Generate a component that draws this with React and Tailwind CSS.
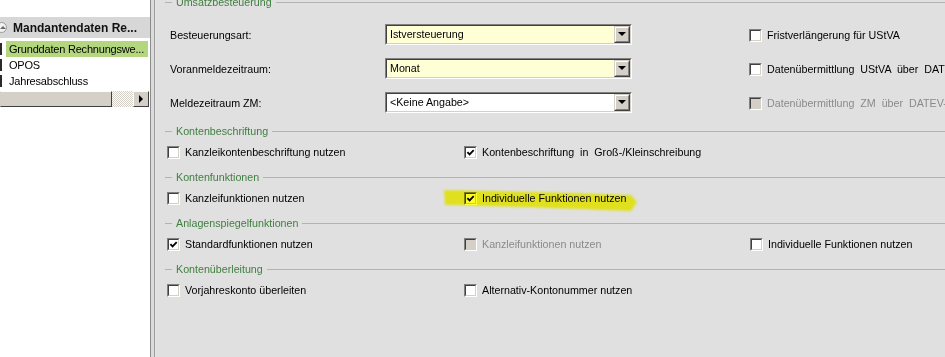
const TOP_ROWS = [
  { label: "Besteuerungsart:", value: "Istversteuerung", yellow: true, check: "Fristverlängerung für UStVA" },
  { label: "Voranmeldezeitraum:", value: "Monat", yellow: true, check: "Datenübermittlung  UStVA  über  DATEV" },
  { label: "Meldezeitraum ZM:", value: "<Keine Angabe>", yellow: false, check: "Datenübermittlung  ZM  über  DATEV-Rechenzentrum", disabled: true },
];

const SECTIONS = [
  {
    title: "Kontenbeschriftung",
    items: [
      { label: "Kanzleikontenbeschriftung nutzen" },
      { label: "Kontenbeschriftung  in  Groß-/Kleinschreibung", checked: true },
    ],
  },
  {
    title: "Kontenfunktionen",
    items: [{ label: "Kanzleifunktionen nutzen" }, { label: "Individuelle Funktionen nutzen", checked: true }],
  },
  {
    title: "Anlagenspiegelfunktionen",
    items: [
      { label: "Standardfunktionen nutzen", checked: true },
      { label: "Kanzleifunktionen nutzen", disabled: true },
      { label: "Individuelle Funktionen nutzen" },
    ],
  },
  {
    title: "Kontenüberleitung",
    items: [{ label: "Vorjahreskonto überleiten" }, { label: "Alternativ-Kontonummer nutzen" }],
  },
];

function Check({ checked, disabled }) {
  return (
    <span className="inline-block h-[13px] w-[13px] shrink-0 border border-t-[#808080] border-l-[#808080] border-r-white border-b-white">
      <span
        className={`flex h-full w-full items-center justify-center border border-t-[#404040] border-l-[#404040] border-r-[#d4d0c8] border-b-[#d4d0c8] ${
          disabled ? "bg-[#d4d0c8]" : "bg-white"
        }`}
      >
        {checked ? (
          <svg viewBox="0 0 9 9" className="h-[9px] w-[9px]">
            <path d="M1.4 4.1 3.6 6.4 7.7 2.1" fill="none" stroke="#000" strokeWidth="1.8" />
          </svg>
        ) : null}
      </span>
    </span>
  );
}

function CheckLabel({ label, checked, disabled }) {
  return (
    <div className="flex items-center gap-[5px] whitespace-pre">
      <Check checked={checked} disabled={disabled} />
      <span className={disabled ? "text-[#8a8a8a]" : "text-black"}>{label}</span>
    </div>
  );
}

function Combo({ value, yellow }) {
  return (
    <div className="flex h-[21px] w-[247px] border border-t-[#808080] border-l-[#808080] border-r-white border-b-white">
      <div
        className={`flex flex-1 items-center border border-t-[#404040] border-l-[#404040] border-r-[#d4d0c8] border-b-[#d4d0c8] ${
          yellow ? "bg-[#ffffd6]" : "bg-white"
        }`}
      >
        <span className="flex-1 pl-[3px] text-black">{value}</span>
        <span className="flex h-full w-[16px] border border-t-[#d4d0c8] border-l-[#d4d0c8] border-r-[#404040] border-b-[#404040]">
          <span className="flex flex-1 items-center justify-center border border-t-white border-l-white border-r-[#808080] border-b-[#808080] bg-[#d4d0c8]">
            <span className="h-0 w-0 border-x-[4px] border-t-[4px] border-x-transparent border-t-black" />
          </span>
        </span>
      </div>
    </div>
  );
}

function Section({ title, className = "" }) {
  return (
    <div className={`flex h-[14px] items-center pl-[9px] ${className}`}>
      <span className="h-px w-[7px] bg-[#b3b3b3]" />
      <span className="px-[4px] text-[#3f7f3f]">{title}</span>
      <span className="h-px flex-1 bg-[#b3b3b3]" />
    </div>
  );
}

function Sidebar() {
  return (
    <div className="flex w-[150px] shrink-0 flex-col bg-white pt-[17px]">
      <div className="flex h-[21px] items-center bg-[#d7d7d7]">
        <span className="-ml-[4px] flex h-[11px] w-[11px] items-center justify-center rounded-full border border-[#9a9a9a] bg-[#f2f2f2]">
          <span className="ml-[3px] h-0 w-0 border-x-[3px] border-b-[3px] border-x-transparent border-b-[#6a6a6a]" />
        </span>
        <span className="ml-[6px] whitespace-nowrap text-[12px] font-bold text-[#111]">Mandantendaten Re...</span>
      </div>
      <div className="mt-[3px] flex flex-col text-[11px] text-black">
        {["Grunddaten Rechnungswe...", "OPOS", "Jahresabschluss"].map((item, i) => (
          <div key={item} className="flex h-[16px] items-center">
            <span className="h-[12px] w-[2px] shrink-0 bg-[#2a2a2a]" />
            <span
              className={`ml-[4px] mr-[2px] flex h-full min-w-0 flex-1 items-center whitespace-nowrap pl-[3px] tracking-[-0.2px] ${
                i === 0 ? "bg-[#b3d67f]" : ""
              }`}
            >
              {item}
            </span>
          </div>
        ))}
      </div>
      <div className="mt-[2px] flex h-[16px]">
        <div className="w-[112px] border border-t-white border-l-[#d4d0c8] border-r-[#404040] border-b-[#404040] bg-[#d4d0c8]" />
        <div className="w-[21px] bg-[repeating-conic-gradient(#d4d0c8_0_25%,#ffffff_0_50%)] bg-[length:2px_2px]" />
        <div className="flex w-[16px] items-center justify-center border border-t-white border-l-white border-r-[#404040] border-b-[#404040] bg-[#d4d0c8]">
          <span className="h-0 w-0 border-y-[4px] border-l-[4px] border-y-transparent border-l-black" />
        </div>
      </div>
    </div>
  );
}

export default function App() {
  return (
    <div className='flex h-[357px] w-[945px] overflow-hidden bg-white font-["Liberation_Sans",Arial,sans-serif] text-[10.7px] leading-none'>
      <Sidebar />
      <div className="flex w-[6px] shrink-0">
        <span className="w-px bg-[#8a8a8a]" />
        <span className="w-[3px] bg-[#dcdcdc]" />
        <span className="w-px bg-[#9c9c9c]" />
        <span className="w-px bg-[#e6e6e6]" />
      </div>
      <div className="relative flex min-w-0 flex-1 flex-col bg-[#e0e0e0] whitespace-nowrap">
        <Section title="Umsatzbesteuerung" className="-mt-[5px]" />
        <div className="mt-[8px] flex flex-col pl-[14px]">
          {TOP_ROWS.map((row) => (
            <div key={row.label} className="grid h-[34px] grid-cols-[215px_247px_1fr] items-center">
              <span className="pt-[3px] text-black">{row.label}</span>
              <Combo value={row.value} yellow={row.yellow} />
              <div className="pl-[117px] pt-[2px]">
                <CheckLabel label={row.check} disabled={row.disabled} />
              </div>
            </div>
          ))}
        </div>
        {SECTIONS.map((section, i) => (
          <div key={section.title} className={i === 0 ? "mt-[5px]" : "mt-[8px]"}>
            <Section title={section.title} />
            <div className="mt-[4px] grid h-[20px] grid-cols-[297px_286px_1fr] items-center pl-[11px]">
              {section.items.map((item) => (
                <CheckLabel key={item.label} {...item} />
              ))}
            </div>
          </div>
        ))}
        <svg
          className="pointer-events-none absolute left-[285px] top-[184px] mix-blend-multiply"
          width="200"
          height="32"
          viewBox="0 0 200 32"
        >
          <defs>
            <filter id="soft">
              <feGaussianBlur stdDeviation="0.9" />
            </filter>
          </defs>
          <path
            d="M3 6 C60 7 140 9 190 11 L196 18 L190 27 C140 25 60 22 4 21 Z"
            fill="#ffff24"
            filter="url(#soft)"
          />
        </svg>
      </div>
    </div>
  );
}
